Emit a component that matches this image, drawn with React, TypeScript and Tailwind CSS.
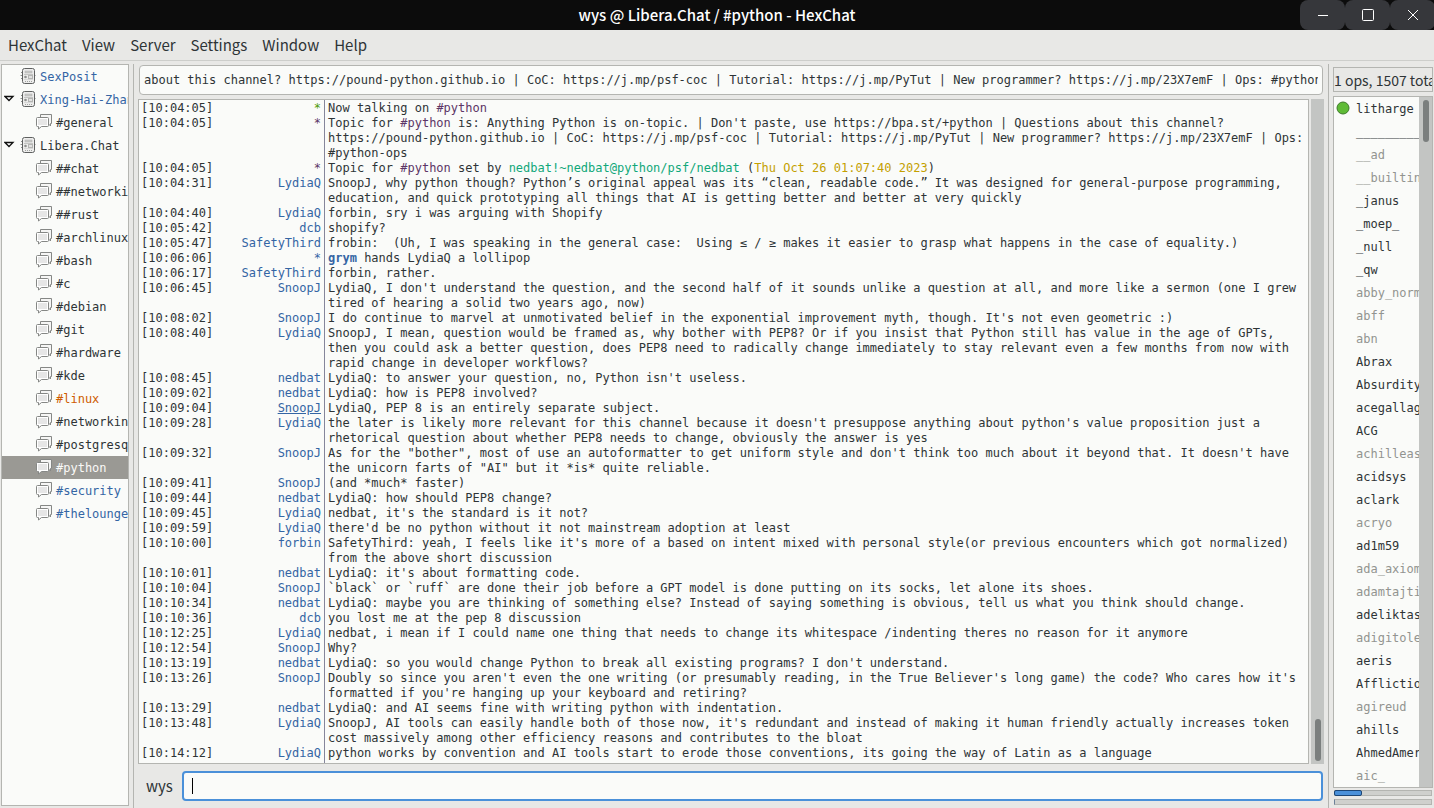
import type { ReactNode } from 'react'

const UI_FONT = 'font-["Noto_Sans_CJK_SC",sans-serif]'
const MONO_FONT = 'font-["DejaVu_Sans_Mono",monospace]'

const menus = ['HexChat', 'View', 'Server', 'Settings', 'Window', 'Help']

interface TreeItem {
  name: string
  kind: 'server' | 'channel'
  open?: boolean
  state?: 'data' | 'message' | 'selected'
}

const tree: TreeItem[] = [
  { name: 'SexPosit', kind: 'server', state: 'data' },
  { name: 'Xing-Hai-Zhan', kind: 'server', open: true, state: 'data' },
  { name: '#general', kind: 'channel' },
  { name: 'Libera.Chat', kind: 'server', open: true },
  { name: '##chat', kind: 'channel' },
  { name: '##networking', kind: 'channel' },
  { name: '##rust', kind: 'channel' },
  { name: '#archlinux', kind: 'channel' },
  { name: '#bash', kind: 'channel' },
  { name: '#c', kind: 'channel' },
  { name: '#debian', kind: 'channel' },
  { name: '#git', kind: 'channel' },
  { name: '#hardware', kind: 'channel' },
  { name: '#kde', kind: 'channel' },
  { name: '#linux', kind: 'channel', state: 'message' },
  { name: '#networking', kind: 'channel' },
  { name: '#postgresql', kind: 'channel' },
  { name: '#python', kind: 'channel', state: 'selected' },
  { name: '#security', kind: 'channel', state: 'data' },
  { name: '#thelounge', kind: 'channel', state: 'data' },
]

interface Message {
  time: string
  nick: string
  nickClass?: string
  text: ReactNode
}

const channel = <span className="text-[#5c3566]">#python</span>

const messages: Message[] = [
  { time: '10:04:05', nick: '*', nickClass: 'text-[#4e9a06]', text: <>Now talking on {channel}</> },
  {
    time: '10:04:05',
    nick: '*',
    nickClass: 'text-[#5c3566]',
    text: (
      <>
        Topic for {channel} is: Anything Python is on-topic. | Don't paste, use https://bpa.st/+python | Questions about this channel?
        {' '}https://pound-python.github.io | CoC: https://j.mp/psf-coc | Tutorial: https://j.mp/PyTut | New programmer? https://j.mp/23X7emF | Ops:
        {' '}<span className="whitespace-nowrap">#python-ops</span>
      </>
    ),
  },
  {
    time: '10:04:05',
    nick: '*',
    nickClass: 'text-[#5c3566]',
    text: (
      <>
        Topic for {channel} set by <span className="text-[#11a879]">nedbat!~nedbat@python/psf/nedbat</span> (
        <span className="text-[#c4a000]">Thu Oct 26 01:07:40 2023</span>)
      </>
    ),
  },
  { time: '10:04:31', nick: 'LydiaQ', text: 'SnoopJ, why python though? Python’s original appeal was its “clean, readable code.” It was designed for general-purpose programming, education, and quick prototyping all things that AI is getting better and better at very quickly' },
  { time: '10:04:40', nick: 'LydiaQ', text: 'forbin, sry i was arguing with Shopify' },
  { time: '10:05:42', nick: 'dcb', text: 'shopify?' },
  { time: '10:05:47', nick: 'SafetyThird', text: 'frobin:  (Uh, I was speaking in the general case:  Using ≤ / ≥ makes it easier to grasp what happens in the case of equality.)' },
  { time: '10:06:06', nick: '*', text: <><b className="text-[#3465a4]">grym</b> hands LydiaQ a lollipop</> },
  { time: '10:06:17', nick: 'SafetyThird', text: 'forbin, rather.' },
  { time: '10:06:45', nick: 'SnoopJ', text: "LydiaQ, I don't understand the question, and the second half of it sounds unlike a question at all, and more like a sermon (one I grew tired of hearing a solid two years ago, now)" },
  { time: '10:08:02', nick: 'SnoopJ', text: "I do continue to marvel at unmotivated belief in the exponential improvement myth, though. It's not even geometric :)" },
  { time: '10:08:40', nick: 'LydiaQ', text: 'SnoopJ, I mean, question would be framed as, why bother with PEP8? Or if you insist that Python still has value in the age of GPTs, then you could ask a better question, does PEP8 need to radically change immediately to stay relevant even a few months from now with rapid change in developer workflows?' },
  { time: '10:08:45', nick: 'nedbat', text: "LydiaQ: to answer your question, no, Python isn't useless." },
  { time: '10:09:02', nick: 'nedbat', text: 'LydiaQ: how is PEP8 involved?' },
  { time: '10:09:04', nick: 'SnoopJ', nickClass: 'text-[#3465a4] underline', text: 'LydiaQ, PEP 8 is an entirely separate subject.' },
  { time: '10:09:28', nick: 'LydiaQ', text: "the later is likely more relevant for this channel because it doesn't presuppose anything about python's value proposition just a rhetorical question about whether PEP8 needs to change, obviously the answer is yes" },
  { time: '10:09:32', nick: 'SnoopJ', text: 'As for the "bother", most of use an autoformatter to get uniform style and don\'t think too much about it beyond that. It doesn\'t have the unicorn farts of "AI" but it *is* quite reliable.' },
  { time: '10:09:41', nick: 'SnoopJ', text: '(and *much* faster)' },
  { time: '10:09:44', nick: 'nedbat', text: 'LydiaQ: how should PEP8 change?' },
  { time: '10:09:45', nick: 'LydiaQ', text: "nedbat, it's the standard is it not?" },
  { time: '10:09:59', nick: 'LydiaQ', text: "there'd be no python without it not mainstream adoption at least" },
  { time: '10:10:00', nick: 'forbin', text: "SafetyThird: yeah, I feels like it's more of a based on intent mixed with personal style(or previous encounters which got normalized) from the above short discussion" },
  { time: '10:10:01', nick: 'nedbat', text: "LydiaQ: it's about formatting code." },
  { time: '10:10:04', nick: 'SnoopJ', text: '`black` or `ruff` are done their job before a GPT model is done putting on its socks, let alone its shoes.' },
  { time: '10:10:34', nick: 'nedbat', text: 'LydiaQ: maybe you are thinking of something else? Instead of saying something is obvious, tell us what you think should change.' },
  { time: '10:10:36', nick: 'dcb', text: 'you lost me at the pep 8 discussion' },
  { time: '10:12:25', nick: 'LydiaQ', text: 'nedbat, i mean if I could name one thing that needs to change its whitespace /indenting theres no reason for it anymore' },
  { time: '10:12:54', nick: 'SnoopJ', text: 'Why?' },
  { time: '10:13:19', nick: 'nedbat', text: "LydiaQ: so you would change Python to break all existing programs? I don't understand." },
  { time: '10:13:26', nick: 'SnoopJ', text: "Doubly so since you aren't even the one writing (or presumably reading, in the True Believer's long game) the code? Who cares how it's formatted if you're hanging up your keyboard and retiring?" },
  { time: '10:13:29', nick: 'nedbat', text: 'LydiaQ: and AI seems fine with writing python with indentation.' },
  { time: '10:13:48', nick: 'LydiaQ', text: "SnoopJ, AI tools can easily handle both of those now, it's redundant and instead of making it human friendly actually increases token cost massively among other efficiency reasons and contributes to the bloat" },
  { time: '10:14:12', nick: 'LydiaQ', text: 'python works by convention and AI tools start to erode those conventions, its going the way of Latin as a language' },
]

const users: { name: string; op?: boolean; away?: boolean }[] = [
  { name: 'litharge', op: true },
  { name: '____________' },
  { name: '__ad', away: true },
  { name: '__builtin', away: true },
  { name: '_janus' },
  { name: '_moep_' },
  { name: '_null' },
  { name: '_qw' },
  { name: 'abby_norm', away: true },
  { name: 'abff', away: true },
  { name: 'abn', away: true },
  { name: 'Abrax' },
  { name: 'Absurdity' },
  { name: 'acegallag' },
  { name: 'ACG' },
  { name: 'achilleas', away: true },
  { name: 'acidsys' },
  { name: 'aclark' },
  { name: 'acryo', away: true },
  { name: 'ad1m59' },
  { name: 'ada_axiom', away: true },
  { name: 'adamtajti', away: true },
  { name: 'adeliktas' },
  { name: 'adigitole', away: true },
  { name: 'aeris' },
  { name: 'Afflictio' },
  { name: 'agireud', away: true },
  { name: 'ahills' },
  { name: 'AhmedAmer' },
  { name: 'aic_', away: true },
]

const topic =
  'about this channel? https://pound-python.github.io | CoC: https://j.mp/psf-coc | Tutorial: https://j.mp/PyTut | New programmer? https://j.mp/23X7emF | Ops: #python-ops'

function ServerIcon() {
  return (
    <svg width="16" height="17" viewBox="0 0 16 17" className="shrink-0">
      <path d="M1 4.500h1M0.500 7.500h1.500M1 10.500h1M14 4.500h1M14 7.500h1.500M14 10.500h1" stroke="#8d8f8d" />
      <rect x="2.500" y="0.500" width="12" height="15" rx="2" fill="#ededec" stroke="#5e6060" />
      <rect x="5" y="3" width="7" height="2" fill="#c9cac8" stroke="#b0b1af" strokeWidth="0.500" />
      <path d="M4 6.500h9" stroke="#c4c5c3" />
      <circle cx="5.500" cy="9" r="1.300" fill="#8d8f8d" />
      <rect x="8.500" y="7.500" width="4" height="3" fill="#e2e2e1" stroke="#b4b5b3" />
      <path d="M5 13.500h7" stroke="#a0a2a0" strokeDasharray="1 1" />
      <path d="M4 11.500h9" stroke="#d8d8d7" />
    </svg>
  )
}

function ChannelIcon() {
  return (
    <svg width="16" height="17" viewBox="0 0 16 17" className="shrink-0">
      <path d="M4.500 0.500h11v9h-1v2.500l-2.500-2.500h-7.500z" fill="#f6f6f5" stroke="#858785" />
      <path d="M1.500 3.500h10q1 0 1 1v7q0 1-1 1h-6l-3 2.500v-2.500h-1q-1 0-1-1v-7q0-1 1-1z" fill="#fff" stroke="#858785" />
      <path d="M2 5h9v6h-9z" fill="#e6e6e6" />
    </svg>
  )
}

function TreeRow({ item }: { item: TreeItem }) {
  const colors = {
    data: 'text-[#3465a4]',
    message: 'text-[#ce5c00]',
    selected: 'bg-[#9a9994] text-[#fafaf8]',
  }
  return (
    <li>
      <button
        type="button"
        className={`flex h-[23px] w-full items-center gap-1 text-left whitespace-nowrap ${item.kind === 'channel' ? 'pl-[34px]' : 'pl-0.5'} ${item.state ? colors[item.state] : ''}`}
      >
        {item.kind === 'server' && (
          <svg width="12" height="13" viewBox="0 0 12 13" className="shrink-0">
            {item.open && <path d="M1 3.500h8l-4 4z" fill="#fff" stroke="#111" strokeWidth="1.300" />}
          </svg>
        )}
        {item.kind === 'server' ? <ServerIcon /> : <ChannelIcon />}
        <span>{item.name}</span>
      </button>
    </li>
  )
}

function TitleBar() {
  const button = 'flex h-[30px] w-[45px] items-center justify-center rounded-lg bg-[#36373b]'
  return (
    <header className="grid h-[30px] shrink-0 grid-cols-[1fr_auto_1fr] items-center bg-[#0c0c0c] text-white">
      <h1 className="col-start-2 text-[15px] font-medium">wys @ Libera.Chat / #python - HexChat</h1>
      <div className="-mr-px flex justify-end">
        <button type="button" aria-label="Minimize" className={button}>
          <svg width="12" height="12" viewBox="0 0 12 12" stroke="#fff"><path d="M1 6.500h10" /></svg>
        </button>
        <button type="button" aria-label="Maximize" className={button}>
          <svg width="12" height="12" viewBox="0 0 12 12" stroke="#fff" fill="none"><rect x="0.5" y="0.5" width="11" height="11" rx="1" /></svg>
        </button>
        <button type="button" aria-label="Close" className={button}>
          <svg width="12" height="12" viewBox="0 0 12 12" stroke="#fff"><path d="M1 1l10 10M11 1l-10 10" /></svg>
        </button>
      </div>
    </header>
  )
}

function ChatLog() {
  return (
    <div className="flex min-h-0 flex-1 gap-0.5">
      <div className="flex min-w-0 flex-1 flex-col overflow-hidden border border-[#b4b5b1] bg-[#fafbf9] text-xs leading-[15px]">
        <div className="ml-[185px] h-px shrink-0 border-l border-[#85869b]" />
        {messages.map((m, i) => (
          <div key={i} className="flex shrink-0">
            <div className="flex w-[185px] shrink-0 justify-between pr-[3px] pl-0.5">
              <time>[{m.time}]</time>
              <span className={m.nickClass ?? 'text-[#3465a4]'}>{m.nick}</span>
            </div>
            <p className="min-w-0 flex-1 border-l border-[#85869b] pl-[3px] whitespace-pre-wrap">{m.text}</p>
          </div>
        ))}
        <div className="ml-[185px] flex-1 border-l border-[#85869b]" />
      </div>
      <div className="flex w-[13px] flex-col items-center justify-end bg-[#c3c5c3] pb-[3px]">
        <div className="h-[42px] w-1.5 rounded-full bg-[#7b7f7e]" />
      </div>
    </div>
  )
}

function UserList() {
  return (
    <aside className="flex w-[106px] shrink-0 flex-col border-l border-[#b4b5b1] pt-[3px] pr-px pb-[3px] pl-1">
      <div className={`h-[25px] shrink-0 overflow-hidden border border-[#b4b5b1] text-sm leading-[25px] whitespace-nowrap ${UI_FONT}`}>
        1 ops, 1507 total
      </div>
      <div className="mt-1 flex min-h-0 flex-1 border border-[#b4b5b1] bg-[#fafbf9]">
        <ul className="min-w-0 flex-1 overflow-hidden text-xs">
          {users.map((u) => (
            <li key={u.name} className={`flex h-[23px] items-center gap-1.5 pl-0.5 whitespace-nowrap ${u.away ? 'text-[#929490]' : ''}`}>
              <svg width="14" height="15" viewBox="0 0 14 15" className="shrink-0">
                {u.op && <circle cx="7" cy="7" r="6" fill="#5fbb36" stroke="#3d7a2a" />}
              </svg>
              {u.name}
            </li>
          ))}
        </ul>
        <div className="flex w-[13px] shrink-0 flex-col items-center bg-[#c3c5c3] pt-[3px]">
          <div className="h-[42px] w-1.5 rounded-full bg-[#7b7f7e]" />
        </div>
      </div>
      <div className="mx-px mt-0.5 flex h-1.5 shrink-0 border border-[#b4b5b1] bg-[#cfd0cd]">
        <div className="-m-px w-7 rounded-xs border border-[#1c4675] bg-[#4a90d9]" />
      </div>
      <div className="mx-px mt-[3px] h-1.5 shrink-0 border border-[#b4b5b1] border-l-[#6d8199] bg-[#cfd0cd]" />
    </aside>
  )
}

export default function App() {
  return (
    <div className={`flex h-screen flex-col overflow-hidden bg-[#e8e8e6] text-[#2e3436] ${UI_FONT}`}>
      <TitleBar />
      <nav className="flex h-[31px] shrink-0 items-center gap-[15px] border-b border-[#cdcecb] px-2 pt-px text-[15px]">
        {menus.map((m) => (
          <button key={m} type="button">{m}</button>
        ))}
      </nav>
      <div className={`flex min-h-0 flex-1 pt-[3px] ${MONO_FONT}`}>
        <ul className="mr-1 mb-0.5 ml-px w-32 shrink-0 overflow-hidden border border-[#b4b5b1] bg-[#fafbf9] text-xs">
          {tree.map((item) => (
            <TreeRow key={item.name} item={item} />
          ))}
        </ul>
        <main className="flex min-w-0 flex-1 flex-col border-l border-[#b4b5b1] pt-px pr-1 pb-[7px] pl-1">
          <input
            aria-label="Topic"
            readOnly
            value={topic}
            className="mr-px mb-1 ml-px h-[30px] shrink-0 rounded-sm border border-[#b4b5b1] bg-[#fafbf9] px-1 text-xs outline-none"
          />
          <ChatLog />
          <div className="mt-[7px] flex h-[30px] shrink-0 items-center gap-[9px] pr-px pl-2">
            <label htmlFor="message" className={`pt-px text-[15px] ${UI_FONT}`}>wys</label>
            <div className="flex h-[30px] flex-1 items-center rounded-sm border-2 border-[#4a90d9] bg-[#fafbf9] pl-2">
              <span className="h-4 w-px bg-black" />
              <input id="message" className="min-w-0 flex-1 bg-transparent px-1 text-xs caret-transparent outline-none" />
            </div>
          </div>
        </main>
        <UserList />
      </div>
    </div>
  )
}
